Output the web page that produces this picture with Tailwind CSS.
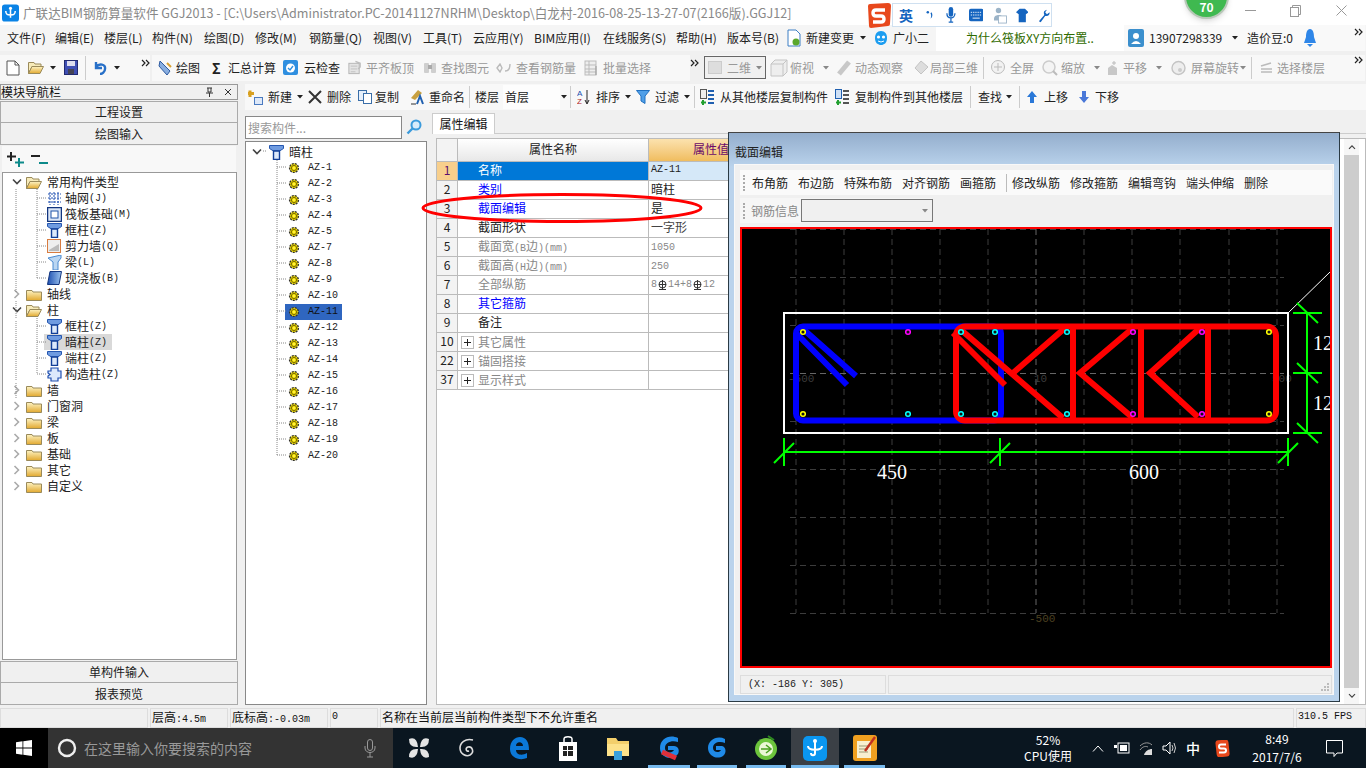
<!DOCTYPE html>
<html lang="zh"><head><meta charset="utf-8">
<script src="https://cdn.jsdelivr.net/npm/@tailwindcss/browser@4"></script>
<title>GGJ2013</title></head>
<body class="m-0 bg-white">
<svg width="0" height="0" class="absolute">
<defs>
<linearGradient id="gf" x1="0" y1="0" x2="0" y2="1"><stop offset="0" stop-color="#fdf3c4"/><stop offset="1" stop-color="#e2a92f"/></linearGradient>
<linearGradient id="gb" x1="0" y1="0" x2="1" y2="0"><stop offset="0" stop-color="#1d4fb0"/><stop offset="1" stop-color="#9cc3ee"/></linearGradient>
<symbol id="col" viewBox="0 0 15 15"><path d="M0.5 0.5H14.5V3.5L10.5 6H4.5L0.5 3.5Z" fill="#6f9be0" stroke="#2456b0" stroke-width="1"/><path d="M4.5 6H10.5V14.5H4.5Z" fill="#dce9fb" stroke="#123f98" stroke-width="1.4"/></symbol>
<symbol id="gear" viewBox="0 0 12 12"><circle cx="6" cy="6" r="4.4" fill="#f4e000" stroke="#333" stroke-width="1.4" stroke-dasharray="2 1"/><circle cx="6" cy="6" r="2.6" fill="none" stroke="#7a6a00" stroke-width="1"/><circle cx="6" cy="6" r="1.2" fill="#ffef40"/></symbol>
<symbol id="fc" viewBox="0 0 16 13"><path d="M0.5 2.5H6L7 4H15.5V12.5H0.5Z" fill="url(#gf)" stroke="#9a8a5a"/></symbol>
<symbol id="fo" viewBox="0 0 16 13"><path d="M0.5 1.5H6L7 3H13V5.5H4L0.5 12.5Z" fill="#f7ebba" stroke="#9a8a5a"/><path d="M4 5.5H15.5L12 12.5H0.5Z" fill="url(#gf)" stroke="#9a8a5a"/></symbol>
<symbol id="chd" viewBox="0 0 10 8"><path d="M1 1.5L5 5.5L9 1.5" fill="none" stroke="#444" stroke-width="1.6"/></symbol>
<symbol id="chr" viewBox="0 0 8 10"><path d="M1.5 1L5.5 5L1.5 9" fill="none" stroke="#aaa" stroke-width="1.6"/></symbol>
<symbol id="tri" viewBox="0 0 6 4"><path d="M0 0H6L3 3.5Z" fill="#222"/></symbol>
<symbol id="trg" viewBox="0 0 6 4"><path d="M0 0H6L3 3.5Z" fill="#888"/></symbol>
<symbol id="more" viewBox="0 0 9 8"><path d="M1 1L4 4L1 7M5 1L8 4L5 7" fill="none" stroke="#222" stroke-width="1.2"/></symbol>
<symbol id="gicon" viewBox="0 0 16 16"><rect x="2" y="3" width="11" height="11" fill="#e4e4e4" stroke="#b4b4b4"/><path d="M4 6H11M4 9H11M4 12H9" stroke="#c0c0c0"/><path d="M9 1L14 3V7L12 9" fill="none" stroke="#bdbdbd" stroke-width="1.5"/></symbol>
<symbol id="dot" viewBox="0 0 7 7"><circle cx="3.5" cy="3.5" r="2.3" fill="#111" stroke="currentColor" stroke-width="1.5"/></symbol>
<symbol id="pl" viewBox="0 0 13 13"><rect x="0.5" y="0.5" width="12" height="12" fill="#fff" stroke="#bbb"/><path d="M3 6.5H10M6.5 3V10" stroke="#222"/></symbol>
</defs>
</svg>
<div class="relative w-[1366px] h-[768px] overflow-hidden flex flex-col bg-[#f0f0f0] text-[12px] leading-[16px] text-[#222] font-['Noto_Sans_CJK_SC','Liberation_Sans',sans-serif]">

<!-- title bar -->
<div class="h-[25px] shrink-0 bg-white flex items-center pl-[2px] text-[12.6px] text-[#888]">
  <svg class="w-[17px] h-[18px] mr-[4px] shrink-0" viewBox="0 0 18 18"><rect width="18" height="18" rx="3" fill="#0a83e6"/><path d="M9 3V14M4 7C4 11 6 11 9 11S14 11 14 7" fill="none" stroke="#fff" stroke-width="1.6"/><circle cx="9" cy="4" r="1.6" fill="#fff"/></svg>
  <span class="whitespace-nowrap">广联达BIM钢筋算量软件 GGJ2013 - [C:\Users\Administrator.PC-20141127NRHM\Desktop\白龙村-2016-08-25-13-27-07(2166版).GGJ12]</span>
</div>

<!-- menu bar -->
<div class="h-[26px] shrink-0 bg-[#f5f5f5] flex items-center pl-[7px] whitespace-nowrap">
  <span class="w-[48px] shrink-0">文件(F)</span><span class="w-[49px] shrink-0">编辑(E)</span><span class="w-[48px] shrink-0">楼层(L)</span><span class="w-[52px] shrink-0">构件(N)</span><span class="w-[51px] shrink-0">绘图(D)</span><span class="w-[54px] shrink-0">修改(M)</span><span class="w-[64px] shrink-0">钢筋量(Q)</span><span class="w-[50px] shrink-0">视图(V)</span><span class="w-[50px] shrink-0">工具(T)</span><span class="w-[61px] shrink-0">云应用(Y)</span><span class="w-[69px] shrink-0">BIM应用(I)</span><span class="w-[73px] shrink-0">在线服务(S)</span><span class="w-[51px] shrink-0">帮助(H)</span><span class="w-[60px] shrink-0">版本号(B)</span>
  <svg class="w-[14px] h-[18px] mr-[5px] shrink-0" viewBox="0 0 14 18"><path d="M1 1H9L13 5V17H1Z" fill="#fff" stroke="#3d7fc4"/><circle cx="9" cy="13" r="3.5" fill="#5ba82c"/></svg>
  <span class="w-[54px] shrink-0">新建变更</span><svg class="w-[6px] h-[4px] shrink-0 mr-[7px]"><use href="#tri"/></svg>
  <svg class="w-[16px] h-[16px] mr-[4px] shrink-0" viewBox="0 0 16 16"><path d="M8 1C12 1 14 4 14 8C14 13 11 15 8 15S2 13 2 8C2 4 4 1 8 1Z" fill="#1c9df0"/><circle cx="5.5" cy="7" r="1.6" fill="#fff"/><circle cx="10.5" cy="7" r="1.6" fill="#fff"/><path d="M5 11Q8 13 11 11" stroke="#fff" fill="none"/></svg>
  <span class="w-[43px] shrink-0">广小二</span>
  <div class="w-[188px] h-[26px] shrink-0 bg-white flex items-center justify-center text-[#2f6b00]">为什么筏板XY方向布置..</div>
  <div class="w-[241px] h-[26px] bg-[#f9f9f9] flex items-center pl-[4px] shrink-0">
    <svg class="w-[16px] h-[18px] mr-[5px] shrink-0" viewBox="0 0 16 18"><rect width="16" height="18" rx="2" fill="#3b8fcd"/><circle cx="8" cy="7" r="3" fill="#fff"/><path d="M3 15Q8 9 13 15Z" fill="#fff"/></svg>
    <span class="w-[83px] shrink-0">13907298339</span><svg class="w-[6px] h-[4px] mr-[9px] shrink-0"><use href="#tri"/></svg>
    <span class="w-[56px] shrink-0">造价豆:0</span>
    <svg class="w-[14px] h-[18px] shrink-0" viewBox="0 0 14 18"><path d="M7 0C10 0 11 4 11 8L13 14H1L3 8C3 4 4 0 7 0Z" fill="#2f86e8"/><path d="M4 15H10L7 18Z" fill="#2f86e8"/></svg>
  </div>
</div>

<!-- toolbar 1 -->
<div class="h-[33px] shrink-0 bg-[#f0f0f0] flex items-center whitespace-nowrap">
  <div class="h-[26px] w-[150px] shrink-0 bg-[#f8f8f8] flex items-center pl-[6px]">
    <svg class="w-[14px] h-[16px] mr-[8px]" viewBox="0 0 14 16"><path d="M1 1H9L13 5V15H1Z" fill="#fff" stroke="#555"/><path d="M9 1V5H13" fill="none" stroke="#555"/></svg>
    <svg class="w-[16px] h-[15px] mr-[6px]"><use href="#fo"/></svg>
    <svg class="w-[6px] h-[4px] mr-[8px]"><use href="#tri"/></svg>
    <svg class="w-[14px] h-[15px] mr-[7px]" viewBox="0 0 14 15"><rect x="0.5" y="0.5" width="13" height="14" fill="#3f4fb4" stroke="#222a70"/><rect x="3" y="1" width="8" height="5" fill="#dde"/><rect x="4" y="9" width="6" height="5" fill="#445"/></svg>
    <span class="w-px h-[24px] bg-[#ccc] mr-[7px]"></span>
    <svg class="w-[15px] h-[14px] mr-[6px]" viewBox="0 0 15 14"><path d="M3 1V7H9M3 6C6 2 13 3 12 8C12 11 9 13 7 13" fill="none" stroke="#2870c8" stroke-width="2.4"/></svg>
    <svg class="w-[6px] h-[4px] mr-[21px]"><use href="#tri"/></svg>
    <svg class="w-[9px] h-[8px] -mt-[10px]"><use href="#more"/></svg>
  </div>
  <div class="h-[26px] ml-[2px] w-[538px] shrink-0 bg-[#f8f8f8] flex items-center pl-[6px]">
    <svg class="w-[14px] h-[16px] mr-[4px]" viewBox="0 0 14 16"><path d="M2 1L12 11L9 15L1 6Z" fill="#89aee0" stroke="#2d5aa0"/><path d="M9 3L13 7" stroke="#d8a030" stroke-width="2"/></svg>
    <span class="w-[36px]">绘图</span><span class="w-[16px] font-bold text-[14px]">Σ</span><span class="w-[55px]">汇总计算</span>
    <svg class="w-[15px] h-[15px] mr-[6px]" viewBox="0 0 15 15"><rect width="15" height="15" rx="2" fill="#2f8fe0"/><circle cx="7.5" cy="8" r="4.5" fill="#fff"/><path d="M5 8L7 10L10 6" stroke="#2f8fe0" fill="none" stroke-width="1.4"/></svg>
    <span class="w-[43px]">云检查</span>
    <svg class="w-[15px] h-[16px] mr-[4px]"><use href="#gicon"/></svg><span class="w-[57px] text-[#999]">平齐板顶</span>
    <svg class="w-[14px] h-[15px] mr-[4px]" viewBox="0 0 14 15"><rect x="1" y="3" width="5" height="10" rx="1" fill="#cfcfcf"/><rect x="8" y="3" width="5" height="10" rx="1" fill="#cfcfcf"/><rect x="5" y="5" width="4" height="4" fill="#aaa"/></svg><span class="w-[55px] text-[#999]">查找图元</span>
    <svg class="w-[15px] h-[10px] mr-[5px]" viewBox="0 0 15 10"><path d="M1 5L4 1L6 5L4 9ZM9 8Q14 8 14 1" fill="none" stroke="#bbb" stroke-width="1.4"/></svg><span class="w-[68px] text-[#999]">查看钢筋量</span>
    <svg class="w-[16px] h-[16px] mr-[3px]" viewBox="0 0 16 16"><rect x="1" y="1" width="11" height="14" fill="#eee" stroke="#bbb"/><path d="M1 5H12M1 9H12M1 12H12M5 1V15" stroke="#bbb"/><path d="M12 6V15" stroke="#999"/></svg><span class="text-[#999]">批量选择</span>
  </div>
  <svg class="w-[9px] h-[8px] -mt-[10px] shrink-0"><use href="#more"/></svg>
  <div class="h-[26px] ml-[5px] w-[661px] shrink-0 bg-[#f8f8f8] flex items-center text-[#999]">
    <div class="w-[62px] h-[23px] border border-[#666] bg-[#f0f0f0] flex items-center pl-[3px] mr-[4px] shrink-0"><span class="w-[14px] h-[13px] bg-[#ddd] border border-[#ccc] mr-[5px] shrink-0"></span><span class="w-[29px] shrink-0">二维</span><svg class="w-[6px] h-[4px] shrink-0"><use href="#trg"/></svg></div>
    <svg class="w-[18px] h-[18px] mr-[2px] shrink-0" viewBox="0 0 18 18"><path d="M1 5L5 1H17V13L13 17H1ZM1 5H13V17M13 5L17 1" fill="#eee" stroke="#c4c4c4"/></svg><span class="w-[33px] shrink-0">俯视</span><svg class="w-[6px] h-[4px] mr-[8px] shrink-0"><use href="#trg"/></svg>
    <svg class="w-[14px] h-[16px] mr-[4px] shrink-0" viewBox="0 0 14 16"><path d="M2 14L12 2" stroke="#c8c8c8" stroke-width="5"/></svg><span class="w-[59px] shrink-0">动态观察</span>
    <svg class="w-[15px] h-[15px] mr-[1px] shrink-0" viewBox="0 0 15 15"><path d="M7 1L14 7L7 14L1 8Z" fill="#ddd" stroke="#c4c4c4"/></svg><span class="w-[53px] shrink-0">局部三维</span>
    <span class="w-px h-[22px] bg-[#ccc] mr-[6px] shrink-0"></span>
    <svg class="w-[17px] h-[17px] mr-[3px] shrink-0" viewBox="0 0 17 17"><circle cx="8" cy="8" r="6.5" fill="#f2f2f2" stroke="#bbb"/><path d="M4 8H12M8 4V12" stroke="#bbb"/></svg><span class="w-[32px] shrink-0">全屏</span>
    <svg class="w-[16px] h-[16px] mr-[3px] shrink-0" viewBox="0 0 16 16"><circle cx="7" cy="7" r="6" fill="#f4f4f4" stroke="#ccc" stroke-width="1.5"/><path d="M11 11L15 15" stroke="#bbb" stroke-width="2"/></svg><span class="w-[33px] shrink-0">缩放</span><svg class="w-[6px] h-[4px] mr-[5px] shrink-0"><use href="#trg"/></svg>
    <svg class="w-[14px] h-[16px] mr-[4px] shrink-0" viewBox="0 0 14 16"><path d="M3 15V8L7 5L12 8V15Z" fill="#c8c8c8"/><path d="M9 1V5M7 3H11" stroke="#bbb"/></svg><span class="w-[33px] shrink-0">平移</span><svg class="w-[6px] h-[4px] mr-[9px] shrink-0"><use href="#trg"/></svg>
    <svg class="w-[15px] h-[16px] mr-[5px] shrink-0" viewBox="0 0 15 16"><circle cx="7.5" cy="8" r="6.5" fill="#eee" stroke="#c4c4c4" stroke-width="1.4"/><circle cx="9" cy="10" r="2" fill="#ccc"/></svg><span class="w-[49px] shrink-0">屏幕旋转</span><svg class="w-[6px] h-[4px] mr-[5px] shrink-0"><use href="#trg"/></svg>
    <span class="w-px h-[22px] bg-[#ccc] mr-[7px] shrink-0"></span>
    <svg class="w-[14px] h-[14px] mr-[4px] shrink-0" viewBox="0 0 14 14"><path d="M2 5L12 2M2 8H13M2 11H13" stroke="#bbb" stroke-width="1.6"/></svg><span class="shrink-0">选择楼层</span>
  </div>
</div>

<!-- main -->
<div class="flex-1 min-h-0 flex">
  <!-- left column -->
  <div class="w-[238px] shrink-0 flex flex-col mr-[7px]">
    <div class="h-[16px] bg-[#f0f0f0] border border-[#999] flex items-center pr-[5px] justify-between text-[#111]"><span>模块导航栏</span><span class="flex items-center gap-[11px]"><svg class="w-[7px] h-[10px]" viewBox="0 0 7 10"><path d="M1 1H6M2 1V5H5V1M0 6H7M3.5 6V10" fill="none" stroke="#333"/></svg><svg class="w-[8px] h-[8px]" viewBox="0 0 8 8"><path d="M1 1L7 7M7 1L1 7" stroke="#333"/></svg></span></div>
    <div class="mt-[1px] h-[22px] bg-[#f0f0f0] border border-[#aaa] flex items-center justify-center">工程设置</div>
    <div class="h-[22px] bg-[#f0f0f0] border border-t-0 border-[#aaa] flex items-center justify-center">绘图输入</div>
    <div class="mt-[1px] mx-[2px] h-[26px] bg-[#f8f8f8] flex items-center pl-[5px] gap-[7px]">
      <svg class="w-[17px] h-[15px]" viewBox="0 0 17 15"><path d="M4 0V9M0 4.5H9" stroke="#222" stroke-width="2"/><path d="M12 6V15M8 10.5H17" stroke="#0d8a8a" stroke-width="2"/></svg>
      <svg class="w-[17px] h-[11px]" viewBox="0 0 17 11"><path d="M0 2H9" stroke="#222" stroke-width="2"/><path d="M8 9H17" stroke="#0d8a8a" stroke-width="2"/></svg>
    </div>
    <div class="relative ml-[2px] w-[235px] h-[488px] bg-white border border-[#999] pt-[1px] text-[#222]">
      <svg class="absolute left-0 top-0 pointer-events-none" width="60" height="340" fill="none" stroke="#888" stroke-dasharray="1 1">
        <path d="M13 16V120M13 128V146M13 148V208M13 210V226M34 16V105M34 25H44M34 41H44M34 57H44M34 73H44M34 89H44M34 105H44M34 145V201M34 153H44M34 169H44M34 185H44M34 201H44"/>
      </svg>
      <div class="h-[16px] flex items-center pl-[9px]"><svg class="w-[10px] h-[8px] mr-[4px]"><use href="#chd"/></svg><svg class="w-[16px] h-[13px] mr-[5px]"><use href="#fo"/></svg>常用构件类型</div>
      <div class="h-[16px] flex items-center pl-[44px]"><svg class="w-[15px] h-[15px] mr-[3px]" viewBox="0 0 15 15"><path d="M1 3H14M1 7H14M1 11H14M3 1V14M7 1V14M11 1V14" stroke="#1f4fb0" stroke-dasharray="2 1"/></svg>轴网<span class="font-['Liberation_Mono',monospace] text-[10px] mt-[2px]">(J)</span></div>
      <div class="h-[16px] flex items-center pl-[44px]"><svg class="w-[15px] h-[15px] mr-[3px]" viewBox="0 0 15 15"><rect x="0.5" y="0.5" width="14" height="14" fill="#dce7f7" stroke="#12357f" stroke-width="1.5"/><rect x="4" y="4" width="7" height="7" fill="#fff" stroke="#2054a8"/></svg>筏板基础<span class="font-['Liberation_Mono',monospace] text-[10px] mt-[2px]">(M)</span></div>
      <div class="h-[16px] flex items-center pl-[44px]"><svg class="w-[15px] h-[15px] mr-[3px]"><use href="#col"/></svg>框柱<span class="font-['Liberation_Mono',monospace] text-[10px] mt-[2px]">(Z)</span></div>
      <div class="h-[16px] flex items-center pl-[44px]"><svg class="w-[15px] h-[14px] mr-[3px]" viewBox="0 0 15 14"><rect x="0.5" y="0.5" width="13" height="13" fill="#eee" stroke="#d87c40"/><path d="M2 11L12 5V12H2Z" fill="#bbb"/></svg>剪力墙<span class="font-['Liberation_Mono',monospace] text-[10px] mt-[2px]">(Q)</span></div>
      <div class="h-[16px] flex items-center pl-[44px]"><svg class="w-[15px] h-[15px] mr-[3px]" viewBox="0 0 15 15"><path d="M1 3L14 0V3L11 7V15H6V7Z" fill="#bad6f2" stroke="#4a8ad0"/></svg>梁<span class="font-['Liberation_Mono',monospace] text-[10px] mt-[2px]">(L)</span></div>
      <div class="h-[16px] flex items-center pl-[44px]"><svg class="w-[15px] h-[14px] mr-[3px]" viewBox="0 0 15 14"><path d="M3 0.5H14.5L12 13.5H0.5Z" fill="url(#gb)" stroke="#12357f"/></svg>现浇板<span class="font-['Liberation_Mono',monospace] text-[10px] mt-[2px]">(B)</span></div>
      <div class="h-[16px] flex items-center pl-[10px]"><svg class="w-[8px] h-[10px] mr-[5px]"><use href="#chr"/></svg><svg class="w-[16px] h-[13px] mr-[5px]"><use href="#fc"/></svg>轴线</div>
      <div class="h-[16px] flex items-center pl-[9px]"><svg class="w-[10px] h-[8px] mr-[4px]"><use href="#chd"/></svg><svg class="w-[16px] h-[13px] mr-[5px]"><use href="#fo"/></svg>柱</div>
      <div class="h-[16px] flex items-center pl-[44px]"><svg class="w-[15px] h-[15px] mr-[3px]"><use href="#col"/></svg>框柱<span class="font-['Liberation_Mono',monospace] text-[10px] mt-[2px]">(Z)</span></div>
      <div class="h-[16px] flex items-center pl-[41px]"><span class="flex items-center h-[16px] bg-[#d9d9d9] pl-[3px] pr-[5px]"><svg class="w-[15px] h-[15px] mr-[3px]"><use href="#col"/></svg>暗柱<span class="font-['Liberation_Mono',monospace] text-[10px] mt-[2px]">(Z)</span></span></div>
      <div class="h-[16px] flex items-center pl-[44px]"><svg class="w-[15px] h-[15px] mr-[3px]"><use href="#col"/></svg>端柱<span class="font-['Liberation_Mono',monospace] text-[10px] mt-[2px]">(Z)</span></div>
      <div class="h-[16px] flex items-center pl-[44px]"><svg class="w-[15px] h-[15px] mr-[3px]" viewBox="0 0 15 15"><path d="M4 1H11V4H14V11H11V14H4V11H1V9L3 7.5L1 6V4H4Z" fill="#dce9fb" stroke="#1f4fb0" stroke-width="1.2"/></svg>构造柱<span class="font-['Liberation_Mono',monospace] text-[10px] mt-[2px]">(Z)</span></div>
      <div class="h-[16px] flex items-center pl-[10px]"><svg class="w-[8px] h-[10px] mr-[5px]"><use href="#chr"/></svg><svg class="w-[16px] h-[13px] mr-[5px]"><use href="#fc"/></svg>墙</div>
      <div class="h-[16px] flex items-center pl-[10px]"><svg class="w-[8px] h-[10px] mr-[5px]"><use href="#chr"/></svg><svg class="w-[16px] h-[13px] mr-[5px]"><use href="#fc"/></svg>门窗洞</div>
      <div class="h-[16px] flex items-center pl-[10px]"><svg class="w-[8px] h-[10px] mr-[5px]"><use href="#chr"/></svg><svg class="w-[16px] h-[13px] mr-[5px]"><use href="#fc"/></svg>梁</div>
      <div class="h-[16px] flex items-center pl-[10px]"><svg class="w-[8px] h-[10px] mr-[5px]"><use href="#chr"/></svg><svg class="w-[16px] h-[13px] mr-[5px]"><use href="#fc"/></svg>板</div>
      <div class="h-[16px] flex items-center pl-[10px]"><svg class="w-[8px] h-[10px] mr-[5px]"><use href="#chr"/></svg><svg class="w-[16px] h-[13px] mr-[5px]"><use href="#fc"/></svg>基础</div>
      <div class="h-[16px] flex items-center pl-[10px]"><svg class="w-[8px] h-[10px] mr-[5px]"><use href="#chr"/></svg><svg class="w-[16px] h-[13px] mr-[5px]"><use href="#fc"/></svg>其它</div>
      <div class="h-[16px] flex items-center pl-[10px]"><svg class="w-[8px] h-[10px] mr-[5px]"><use href="#chr"/></svg><svg class="w-[16px] h-[13px] mr-[5px]"><use href="#fc"/></svg>自定义</div>
    </div>
    <div class="mt-[1px] h-[22px] bg-[#f0f0f0] border border-[#aaa] flex items-center justify-center">单构件输入</div>
    <div class="h-[22px] bg-[#f0f0f0] border border-t-0 border-[#aaa] flex items-center justify-center">报表预览</div>
  </div>

  <!-- right area -->
  <div class="flex-1 min-w-0 flex flex-col">
    <!-- toolbar 2 -->
    <div class="h-[26px] shrink-0 bg-[#f8f8f8] flex items-center whitespace-nowrap pl-[3px]">
      <svg class="w-[15px] h-[15px] mr-[5px]" viewBox="0 0 15 15"><path d="M2 0.5V7M-1 3.5H6" stroke="#d8a020" stroke-width="3"/><rect x="6.5" y="7.5" width="8" height="7" fill="#dde8f8" stroke="#4a7ac0"/></svg><span class="w-[29px]">新建</span><svg class="w-[6px] h-[4px] mr-[5px]"><use href="#tri"/></svg>
      <svg class="w-[14px] h-[14px] mr-[5px]" viewBox="0 0 14 14"><path d="M1 1L13 13M13 1L1 13" stroke="#333" stroke-width="2"/></svg><span class="w-[31px]">删除</span>
      <svg class="w-[14px] h-[14px] mr-[3px]" viewBox="0 0 14 14"><rect x="0.5" y="0.5" width="8" height="10" fill="#e6f0fb" stroke="#3a6ea8"/><rect x="5.5" y="3.5" width="8" height="10" fill="#fff" stroke="#3a6ea8"/></svg><span class="w-[35px]">复制</span>
      <svg class="w-[15px] h-[16px] mr-[4px]" viewBox="0 0 15 16"><path d="M1 9L8 1L12 4L5 11Z" fill="#c8a040"/><path d="M7 15L10 7L13 15" fill="none" stroke="#2060b0" stroke-width="2"/><path d="M1 15H6" stroke="#333"/></svg><span class="w-[40px]">重命名</span>
      <span class="w-px h-[22px] bg-[#ccc] mr-[5px]"></span><span class="w-[28px]">楼层</span>
      <div class="w-[57px] h-[24px] bg-[#fdfdfd] pl-[2px] flex items-center mr-[1px]">首层</div><svg class="w-[6px] h-[4px] mr-[3px]"><use href="#tri"/></svg>
      <span class="w-px h-[22px] bg-[#ccc] mr-[6px]"></span>
      <svg class="w-[14px] h-[16px] mr-[5px]" viewBox="0 0 14 16"><text x="0" y="7" font-size="8" fill="#2050b0" font-family="Liberation Sans">A</text><text x="0" y="15" font-size="8" fill="#b02020" font-family="Liberation Sans">Z</text><path d="M10 1V14M8 11L10 15L12 11" stroke="#222" fill="none"/></svg><span class="w-[29px]">排序</span><svg class="w-[6px] h-[4px] mr-[5px]"><use href="#tri"/></svg>
      <svg class="w-[14px] h-[14px] mr-[5px]" viewBox="0 0 14 14"><path d="M0.5 0.5H13.5L9 6V13.5L5 11V6Z" fill="#4f9fe8" stroke="#2070c0"/></svg><span class="w-[29px]">过滤</span><svg class="w-[6px] h-[4px] mr-[4px]"><use href="#tri"/></svg>
      <span class="w-px h-[22px] bg-[#ccc] mr-[5px]"></span>
      <svg class="w-[14px] h-[17px] mr-[6px]" viewBox="0 0 14 17"><rect x="0.5" y="0.5" width="6" height="9" fill="#eee" stroke="#555"/><path d="M3 11V16M1 13.5H6" stroke="#22a030" stroke-width="2"/><path d="M8 2H14M8 6H14M8 10H14M8 14H14" stroke="#2060b0" stroke-width="2"/></svg><span class="w-[115px]">从其他楼层复制构件</span>
      <svg class="w-[14px] h-[17px] mr-[6px]" viewBox="0 0 14 17"><rect x="0.5" y="0.5" width="6" height="9" fill="#cfe0f5" stroke="#2060b0"/><path d="M3 11V16M1 13.5H6" stroke="#22a030" stroke-width="2"/><path d="M8 2H14M8 6H14M8 10H14M8 14H14" stroke="#555" stroke-width="2"/></svg><span class="w-[115px]">复制构件到其他楼层</span>
      <span class="w-px h-[22px] bg-[#ccc] mr-[7px]"></span><span class="w-[28px]">查找</span><svg class="w-[6px] h-[4px] mr-[7px]"><use href="#tri"/></svg>
      <span class="w-px h-[22px] bg-[#ccc] mr-[7px]"></span>
      <svg class="w-[10px] h-[12px] mr-[7px]" viewBox="0 0 10 12"><path d="M5 0L10 6H7V12H3V6H0Z" fill="#2a78d8"/></svg><span class="w-[35px]">上移</span>
      <svg class="w-[10px] h-[12px] mr-[6px]" viewBox="0 0 10 12"><path d="M5 12L10 6H7V0H3V6H0Z" fill="#4a78d8"/></svg><span>下移</span>
    </div>
    <div class="flex-1 min-h-0 flex">
      <!-- component list -->
      <div class="w-[182px] shrink-0 flex flex-col mt-[6px] mb-[3px] mr-[5px]">
        <div class="h-[23px] flex mb-[2px]">
          <div class="w-[157px] h-[23px] bg-white border border-[#888] flex items-center pl-[2px] text-[#999]">搜索构件...</div>
          <svg class="w-[16px] h-[16px] ml-[4px] mt-[3px]" viewBox="0 0 16 16"><circle cx="10" cy="6" r="4.5" fill="#d8ecfb" stroke="#3b9bdc" stroke-width="2"/><path d="M7 9L1.5 14.5" stroke="#3b9bdc" stroke-width="2.4"/></svg>
        </div>
        <div class="relative flex-1 bg-white border border-[#888] pt-[2px]">
          <svg class="absolute left-0 top-0 pointer-events-none" width="42" height="320" fill="none" stroke="#888" stroke-dasharray="1 1">
            <path d="M31 18V313M31 25H41M31 41H41M31 57H41M31 73H41M31 89H41M31 105H41M31 121H41M31 137H41M31 153H41M31 169H41M31 185H41M31 201H41M31 217H41M31 233H41M31 249H41M31 265H41M31 281H41M31 297H41M31 313H41M17 9H21"/>
          </svg>
          <div class="h-[16px] flex items-center pl-[6px]"><svg class="w-[10px] h-[8px] mr-[7px]"><use href="#chd"/></svg><svg class="w-[15px] h-[15px] mr-[5px]"><use href="#col"/></svg>暗柱</div>
          <div class="font-['Liberation_Mono',monospace] text-[10px] text-[#222]">
            <div class="h-[16px] flex items-center pl-[42px]"><svg class="w-[12px] h-[12px] mr-[8px]"><use href="#gear"/></svg>AZ-1</div>
            <div class="h-[16px] flex items-center pl-[42px]"><svg class="w-[12px] h-[12px] mr-[8px]"><use href="#gear"/></svg>AZ-2</div>
            <div class="h-[16px] flex items-center pl-[42px]"><svg class="w-[12px] h-[12px] mr-[8px]"><use href="#gear"/></svg>AZ-3</div>
            <div class="h-[16px] flex items-center pl-[42px]"><svg class="w-[12px] h-[12px] mr-[8px]"><use href="#gear"/></svg>AZ-4</div>
            <div class="h-[16px] flex items-center pl-[42px]"><svg class="w-[12px] h-[12px] mr-[8px]"><use href="#gear"/></svg>AZ-5</div>
            <div class="h-[16px] flex items-center pl-[42px]"><svg class="w-[12px] h-[12px] mr-[8px]"><use href="#gear"/></svg>AZ-7</div>
            <div class="h-[16px] flex items-center pl-[42px]"><svg class="w-[12px] h-[12px] mr-[8px]"><use href="#gear"/></svg>AZ-8</div>
            <div class="h-[16px] flex items-center pl-[42px]"><svg class="w-[12px] h-[12px] mr-[8px]"><use href="#gear"/></svg>AZ-9</div>
            <div class="h-[16px] flex items-center pl-[42px]"><svg class="w-[12px] h-[12px] mr-[8px]"><use href="#gear"/></svg>AZ-10</div>
            <div class="h-[16px] flex items-center pl-[39px]"><span class="w-[57px] h-[16px] bg-[#2f66c0] flex items-center pl-[3px] text-[#111]"><svg class="w-[12px] h-[12px] mr-[8px] shrink-0"><use href="#gear"/></svg>AZ-11</span></div>
            <div class="h-[16px] flex items-center pl-[42px]"><svg class="w-[12px] h-[12px] mr-[8px]"><use href="#gear"/></svg>AZ-12</div>
            <div class="h-[16px] flex items-center pl-[42px]"><svg class="w-[12px] h-[12px] mr-[8px]"><use href="#gear"/></svg>AZ-13</div>
            <div class="h-[16px] flex items-center pl-[42px]"><svg class="w-[12px] h-[12px] mr-[8px]"><use href="#gear"/></svg>AZ-14</div>
            <div class="h-[16px] flex items-center pl-[42px]"><svg class="w-[12px] h-[12px] mr-[8px]"><use href="#gear"/></svg>AZ-15</div>
            <div class="h-[16px] flex items-center pl-[42px]"><svg class="w-[12px] h-[12px] mr-[8px]"><use href="#gear"/></svg>AZ-16</div>
            <div class="h-[16px] flex items-center pl-[42px]"><svg class="w-[12px] h-[12px] mr-[8px]"><use href="#gear"/></svg>AZ-17</div>
            <div class="h-[16px] flex items-center pl-[42px]"><svg class="w-[12px] h-[12px] mr-[8px]"><use href="#gear"/></svg>AZ-18</div>
            <div class="h-[16px] flex items-center pl-[42px]"><svg class="w-[12px] h-[12px] mr-[8px]"><use href="#gear"/></svg>AZ-19</div>
            <div class="h-[16px] flex items-center pl-[42px]"><svg class="w-[12px] h-[12px] mr-[8px]"><use href="#gear"/></svg>AZ-20</div>
          </div>
        </div>
      </div>
      <!-- property panel -->
      <div class="flex-1 min-w-0 flex flex-col mb-[3px]">
        <div class="h-[22px] mt-[2px] flex items-end border-b border-[#ccc] ">
          <div class="w-[63px] h-[21px] -mb-px bg-white border border-b-0 border-[#ccc] flex items-center justify-center text-[#111]">属性编辑</div>
        </div>
        <div class="flex-1 min-h-0 bg-white flex ml-[4px] mt-[4px] border border-[#bbb]">
          <div class="flex-1 min-w-0 flex flex-col">
            <div class="h-[23px] flex border-b border-[#bbb]">
              <div class="w-[21px] shrink-0 bg-[#f3f3f3] border-r border-[#bbb]"></div>
              <div class="w-[191px] shrink-0 bg-linear-to-b from-white to-[#e8e8e8] border-r border-[#bbb] flex items-center justify-center pb-[2px]">属性名称</div>
              <div class="flex-1 bg-linear-to-b from-[#fbe2ae] to-[#f0bd5e] pl-[44px] pb-[2px] flex items-center text-[#6a0a6a]">属性值</div>
            </div>
            <div class="h-[19px] flex border-b border-[#bbb]"><div class="w-[21px] shrink-0 bg-[#f8cf8c] border-r border-[#bbb] text-center text-[#5a1070]">1</div><div class="w-[191px] shrink-0 bg-[#0078d7] border-r border-[#bbb] pl-[20px] text-white">名称</div><div class="flex-1 bg-[#d5e8f8] pl-[2px] font-['Liberation_Mono',monospace] text-[10px]">AZ-11</div></div>
            <div class="h-[19px] flex border-b border-[#bbb]"><div class="w-[21px] shrink-0 bg-[#f3f3f3] border-r border-[#bbb] text-center">2</div><div class="w-[191px] shrink-0 border-r border-[#bbb] pl-[20px] text-[#0000ff]">类别</div><div class="flex-1 pl-[2px]">暗柱</div></div>
            <div class="h-[19px] flex border-b border-[#bbb]"><div class="w-[21px] shrink-0 bg-[#f3f3f3] border-r border-[#bbb] text-center">3</div><div class="w-[191px] shrink-0 border-r border-[#bbb] pl-[20px] text-[#0000ff]">截面编辑</div><div class="flex-1 pl-[2px]">是</div></div>
            <div class="h-[19px] flex border-b border-[#bbb]"><div class="w-[21px] shrink-0 bg-[#f3f3f3] border-r border-[#bbb] text-center">4</div><div class="w-[191px] shrink-0 border-r border-[#bbb] pl-[20px]">截面形状</div><div class="flex-1 pl-[2px] text-[#444]">一字形</div></div>
            <div class="h-[19px] flex border-b border-[#bbb] text-[#888]"><div class="w-[21px] shrink-0 bg-[#f3f3f3] border-r border-[#bbb] text-center text-[#222]">5</div><div class="w-[191px] shrink-0 border-r border-[#bbb] pl-[20px]">截面宽<span class="font-['Liberation_Mono',monospace] text-[10px]">(B</span>边<span class="font-['Liberation_Mono',monospace] text-[10px]">)(mm)</span></div><div class="flex-1 pl-[2px] font-['Liberation_Mono',monospace] text-[10px] leading-[19px]">1050</div></div>
            <div class="h-[19px] flex border-b border-[#bbb] text-[#888]"><div class="w-[21px] shrink-0 bg-[#f3f3f3] border-r border-[#bbb] text-center text-[#222]">6</div><div class="w-[191px] shrink-0 border-r border-[#bbb] pl-[20px]">截面高<span class="font-['Liberation_Mono',monospace] text-[10px]">(H</span>边<span class="font-['Liberation_Mono',monospace] text-[10px]">)(mm)</span></div><div class="flex-1 pl-[2px] font-['Liberation_Mono',monospace] text-[10px] leading-[19px]">250</div></div>
            <div class="h-[19px] flex border-b border-[#bbb] text-[#888]"><div class="w-[21px] shrink-0 bg-[#f3f3f3] border-r border-[#bbb] text-center text-[#222]">7</div><div class="w-[191px] shrink-0 border-r border-[#bbb] pl-[20px]">全部纵筋</div><div class="flex-1 pl-[2px] font-['Liberation_Mono',monospace] text-[10px] flex items-center">8<svg class="w-[9px] h-[10px] mx-[1px]" viewBox="0 0 9 10"><circle cx="4.5" cy="4.5" r="3.5" fill="none" stroke="#333"/><path d="M4.5 0V9M1 9.5H8M1 4.5H8" stroke="#333"/></svg>14+8<svg class="w-[9px] h-[10px] mx-[1px]" viewBox="0 0 9 10"><circle cx="4.5" cy="4.5" r="3.5" fill="none" stroke="#333"/><path d="M4.5 0V9M1 9.5H8M1 4.5H8" stroke="#333"/></svg>12</div></div>
            <div class="h-[19px] flex border-b border-[#bbb]"><div class="w-[21px] shrink-0 bg-[#f3f3f3] border-r border-[#bbb] text-center">8</div><div class="w-[191px] shrink-0 border-r border-[#bbb] pl-[20px] text-[#0000ff]">其它箍筋</div><div class="flex-1"></div></div>
            <div class="h-[19px] flex border-b border-[#bbb]"><div class="w-[21px] shrink-0 bg-[#f3f3f3] border-r border-[#bbb] text-center">9</div><div class="w-[191px] shrink-0 border-r border-[#bbb] pl-[20px]">备注</div><div class="flex-1"></div></div>
            <div class="h-[19px] flex border-b border-[#bbb]"><div class="w-[21px] shrink-0 bg-[#f3f3f3] border-r border-[#bbb] text-center">10</div><div class="w-[191px] shrink-0 border-r border-[#bbb] pl-[3px] flex items-center text-[#888]"><svg class="w-[13px] h-[13px] mr-[4px]"><use href="#pl"/></svg>其它属性</div><div class="flex-1"></div></div>
            <div class="h-[19px] flex border-b border-[#bbb]"><div class="w-[21px] shrink-0 bg-[#f3f3f3] border-r border-[#bbb] text-center">22</div><div class="w-[191px] shrink-0 border-r border-[#bbb] pl-[3px] flex items-center text-[#888]"><svg class="w-[13px] h-[13px] mr-[4px]"><use href="#pl"/></svg>锚固搭接</div><div class="flex-1"></div></div>
            <div class="h-[19px] flex border-b border-[#bbb]"><div class="w-[21px] shrink-0 bg-[#f3f3f3] border-r border-[#bbb] text-center">37</div><div class="w-[191px] shrink-0 border-r border-[#bbb] pl-[3px] flex items-center text-[#888]"><svg class="w-[13px] h-[13px] mr-[4px]"><use href="#pl"/></svg>显示样式</div><div class="flex-1"></div></div>
          </div>
          <!-- scrollbar -->
          <div class="w-[26px] shrink-0 bg-white flex justify-end pr-[6px]">
            <div class="w-[15px] flex flex-col bg-[#f0f0f0]">
              <div class="h-[16px] bg-[#f6f6f6] flex items-center justify-center"><svg class="w-[8px] h-[6px] rotate-180"><use href="#chd"/></svg></div>
              <div class="flex-1 bg-[#cdcdcd]"></div>
              <div class="h-[16px] bg-[#f6f6f6] flex items-center justify-center"><svg class="w-[8px] h-[6px]"><use href="#chd"/></svg></div>
            </div>
          </div>
        </div>
      </div>
    </div>
  </div>
</div>

<!-- status bar -->
<div class="h-[20px] shrink-0 flex gap-[2px] text-[#111] bg-[#f0f0f0] whitespace-nowrap">
  <div class="w-[148px] border border-[#ddd]"></div>
  <div class="w-[78px] border border-[#ddd] pl-[1px]">层高<span class="font-['Liberation_Mono',monospace] text-[10px]">:4.5m</span></div>
  <div class="w-[98px] border border-[#ddd] pl-[1px]">底标高<span class="font-['Liberation_Mono',monospace] text-[10px]">:-0.03m</span></div>
  <div class="w-[48px] border border-[#ddd] pl-[1px] font-['Liberation_Mono',monospace] text-[10px]">0</div>
  <div class="w-[914px] border border-[#ddd] pl-[1px]">名称在当前层当前构件类型下不允许重名</div>
  <div class="flex-1 border border-[#ddd] pl-[1px] font-['Liberation_Mono',monospace] text-[10px]">310.5 FPS</div>
</div>

<!-- taskbar -->
<div class="h-[40px] shrink-0 bg-[#0a1620] flex items-stretch text-white relative">
  <div class="w-[48px] shrink-0 bg-black flex items-center justify-center">
    <svg class="w-[16px] h-[16px]" viewBox="0 0 16 16" fill="#fff"><path d="M0 2.2L6.5 1.3V7.6H0ZM7.3 1.2L16 0V7.6H7.3ZM0 8.4H6.5V14.7L0 13.8ZM7.3 8.4H16V16L7.3 14.8Z"/></svg>
  </div>
  <div class="w-[345px] shrink-0 bg-[#333] flex items-center pl-[9px] text-[14px] text-[#999] relative">
    <svg class="w-[20px] h-[20px] mr-[7px]" viewBox="0 0 20 20"><circle cx="10" cy="10" r="8" fill="none" stroke="#eee" stroke-width="2.4"/></svg>
    在这里输入你要搜索的内容
    <svg class="absolute left-[316px] top-[11px] w-[12px] h-[19px]" viewBox="0 0 12 19"><rect x="3.5" y="0.5" width="5" height="11" rx="2.5" fill="none" stroke="#999"/><path d="M1 7V9C1 15 11 15 11 9V7M6 13V18M3 18H9" fill="none" stroke="#999"/></svg>
  </div>
  <div class="flex items-center pl-[1px] shrink-0">
    <div class="w-[49px] flex justify-center"><svg class="w-[24px] h-[24px]" viewBox="0 0 24 24" fill="#e4e4e4"><path d="M2 3Q10 0 11 11Q2 12 2 3ZM22 3Q14 0 13 11Q22 12 22 3ZM2 21Q10 24 11 13Q2 12 2 21ZM22 21Q14 24 13 13Q22 12 22 21Z"/></svg></div>
    <div class="w-[49px] flex justify-center"><svg class="w-[22px] h-[22px]" viewBox="0 0 22 22"><path d="M16 3C8 1 3 6 3 11C3 17 9 20 13 18C18 15 15 9 11 10C8 11 9 15 12 14" fill="none" stroke="#ddd" stroke-width="1.6"/></svg></div>
    <div class="w-[54px] flex justify-center"><svg class="w-[22px] h-[24px]" viewBox="0 0 22 24"><path d="M2 13C2 5 7 1 12 1C18 1 21 6 21 14H8C8 19 14 20 19 17V22C12 25 2 22 2 13ZM8 10H15C15 5 8 5 8 10Z" fill="#0b78d8"/></svg></div>
    <div class="w-[44px] flex justify-center"><svg class="w-[20px] h-[25px]" viewBox="0 0 20 25"><path d="M1 6H19V25H1Z" fill="#fff"/><path d="M6 6V3C6 0 14 0 14 3V6" fill="none" stroke="#fff" stroke-width="1.5"/><path d="M5 10H9V14H5ZM10 10H15V14H10ZM5 15H9V20H5ZM10 15H15V20H10Z" fill="#222"/></svg></div>
    <div class="w-[55px] flex justify-center"><svg class="w-[22px] h-[24px]" viewBox="0 0 22 24"><path d="M0 2H9L11 5H22V20H0Z" fill="#f3cf6b"/><rect x="0" y="8" width="22" height="12" fill="#fde28a"/><rect x="7" y="15" width="8" height="9" fill="#39a0dc"/></svg></div>
    <div class="w-[48px] flex justify-center"><svg class="w-[26px] h-[28px]" viewBox="0 0 26 28"><path d="M22 4C14 0 4 4 4 14C4 24 16 27 22 20C24 16 22 12 18 12H12V16H18C16 20 9 19 9 14C9 8 16 6 22 8Z" fill="#1f8ae8"/><path d="M6 18L20 24" stroke="#e0303a" stroke-width="5"/></svg></div>
    <div class="w-[47px] flex justify-center"><svg class="w-[24px] h-[26px]" viewBox="0 0 24 26"><path d="M20 4C12 0 3 5 3 13C3 21 12 25 18 21C22 18 21 12 17 11H11V15H16C15 18 8 18 8 13C8 7 15 6 20 8Z" fill="#1f8ae8"/></svg></div>
    <div class="w-[51px] flex justify-center"><svg class="w-[24px] h-[26px]" viewBox="0 0 24 26"><circle cx="12" cy="14" r="11" fill="#6cc43c"/><circle cx="12" cy="14" r="7" fill="#eaf7d5"/><path d="M7 14H17M12 10L17 14L12 18" stroke="#4aa020" fill="none" stroke-width="1.5"/><path d="M14 1L20 5" stroke="#2d8a20" stroke-width="2"/></svg></div>
    <div class="w-[48px] h-[40px] bg-[#3b4046] flex items-center justify-center"><svg class="w-[24px] h-[25px]" viewBox="0 0 24 25"><rect width="24" height="25" rx="5" fill="#0a96f0"/><path d="M12 5V17C12 20 8 20 8 17M5 10C5 15 19 15 19 10" fill="none" stroke="#fff" stroke-width="2"/><circle cx="12" cy="5" r="2" fill="#fff"/></svg></div>
    <div class="w-[52px] flex justify-center"><svg class="w-[24px] h-[26px]" viewBox="0 0 24 26"><rect width="24" height="26" rx="3" fill="#f0a020"/><rect x="4" y="6" width="14" height="17" fill="#f8efd0"/><path d="M6 11H15M6 14H15M6 17H15" stroke="#997"/><path d="M22 2L12 16" stroke="#c03020" stroke-width="2.4"/></svg></div>
  </div>
  <div class="absolute left-[648px] bottom-0 h-[3px] w-[42px] bg-[#76b9ed]"></div>
  <div class="absolute left-[697px] bottom-0 h-[3px] w-[40px] bg-[#76b9ed]"></div>
  <div class="absolute left-[746px] bottom-0 h-[3px] w-[40px] bg-[#76b9ed]"></div>
  <div class="absolute left-[791px] bottom-0 h-[3px] w-[48px] bg-[#76b9ed]"></div>
  <div class="absolute left-[844px] bottom-0 h-[3px] w-[41px] bg-[#76b9ed]"></div>

  <div class="ml-[123px] w-[68px] shrink-0 flex flex-col items-center justify-center text-[12px] leading-[16px] whitespace-nowrap"><span>52%</span><span>CPU使用</span></div>
  <div class="ml-[10px] flex items-center shrink-0">
    <svg class="w-[12px] h-[7px] mr-[10px]" viewBox="0 0 12 7"><path d="M1 6.5L6 1L11 6.5" fill="none" stroke="#fff"/></svg>
    <svg class="w-[16px] h-[12px] mr-[9px]" viewBox="0 0 16 12"><rect x="4" y="1" width="11" height="10" fill="none" stroke="#fff"/><rect x="6" y="3" width="7" height="6" fill="#fff"/><path d="M0 3H3V6H0Z" fill="#fff"/></svg>
    <svg class="w-[14px] h-[13px] mr-[9px]" viewBox="0 0 14 13"><path d="M1 8C4 4 7 4 9 5M1 4C5 0 10 0 13 3" fill="none" stroke="#999"/><path d="M5 13C6 9 10 7 13 7V13Z" fill="#ddd"/></svg>
    <svg class="w-[15px] h-[14px] mr-[9px]" viewBox="0 0 15 14"><path d="M1 5H4L8 1V13L4 9H1Z" fill="none" stroke="#fff"/><path d="M10 4Q12 7 10 10M12 2Q15 7 12 12" fill="none" stroke="#ccc"/></svg>
    <span class="text-[14px] font-medium mr-[15px] w-[14px]">中</span>
    <svg class="w-[15px] h-[17px]" viewBox="0 0 15 17"><rect x="1" y="0" width="13" height="17" rx="3" fill="#e8481c" transform="rotate(-6 7 8)"/><path d="M11 4.5H6Q4 4.5 4 6.5T6 8.5H9Q11 8.5 11 10.5T9 12.5H4" fill="none" stroke="#fff" stroke-width="2"/></svg>
  </div>
  <div class="ml-[13px] w-[68px] shrink-0 flex flex-col items-center justify-center text-[12px] leading-[18px] whitespace-nowrap"><span>8:49</span><span>2017/7/6</span></div>
  <div class="ml-[15px] flex items-center"><svg class="w-[17px] h-[17px]" viewBox="0 0 17 17"><path d="M0.5 0.5H16.5V13H11L8 16.5V13H0.5Z" fill="none" stroke="#fff"/></svg></div>
</div>

<!-- floating section editor window -->
<div class="absolute left-[728px] top-[132px] w-[612px] h-[570px] border border-[#2a3a44] border-t-[#444] bg-linear-to-b from-[#94aecd] to-[#bad3ec] to-[6%] flex flex-col pl-[5px] pr-[5px] pb-[6px] z-10">
  <div class="h-[31px] shrink-0 flex items-center text-[#222] pt-[6px] pl-[1px]">截面编辑</div>
  <div class="flex-1 min-h-0 bg-[#f0f0f0] border border-[#f8f8f8] flex flex-col pl-[5px] pr-[1px] pt-[5px]">
    <div class="h-[25px] shrink-0 bg-[#fafafa] flex items-center pl-[3px] whitespace-nowrap">
      <span class="w-[1px] h-[16px] border-l-2 border-dotted border-[#aaa] mr-[7px]"></span>
      <span class="w-[46px]">布角筋</span><span class="w-[46px]">布边筋</span><span class="w-[58px]">特殊布筋</span><span class="w-[58px]">对齐钢筋</span><span class="w-[46px]">画箍筋</span>
      <span class="w-px h-[18px] bg-[#bbb] mr-[5px]"></span>
      <span class="w-[58px]">修改纵筋</span><span class="w-[58px]">修改箍筋</span><span class="w-[58px]">编辑弯钩</span><span class="w-[58px]">端头伸缩</span><span>删除</span>
    </div>
    <div class="h-[25px] mt-[3px] w-[192px] shrink-0 bg-[#f6f6f6] flex items-center pl-[3px] text-[#888] whitespace-nowrap">
      <span class="w-[1px] h-[16px] border-l-2 border-dotted border-[#aaa] mr-[6px]"></span>
      <span class="w-[50px] shrink-0">钢筋信息</span>
      <div class="w-[132px] h-[23px] shrink-0 border border-[#777] bg-[#f0f0f0] flex items-center justify-end pr-[4px]"><svg class="w-[6px] h-[4px]"><use href="#trg"/></svg></div>
    </div>
    <div class="shrink-0 w-[592px] h-[441px] mt-[4px] border-2 border-[#ff0000] bg-black overflow-hidden">
      <svg class="block" width="588" height="437" viewBox="742 229 588 437">
        <g stroke="#3c3c3c" stroke-width="1" stroke-dasharray="6 4" fill="none">
          <path d="M796 229V613M844 229V613M892 229V613M940 229V613M988 229V613M1084 229V613M1132 229V613M1180 229V613M1229 229V613M1277 229V613"/>
          <path d="M790 229.5H1284M790 277.5H1284M790 325.5H1284M790 421.5H1284M790 469.5H1284M790 517.5H1284M790 565.5H1284M790 613.5H1284"/>
        </g>
        <path d="M1036 229V613M790 373.5H1284" stroke="#666" stroke-dasharray="6 4" fill="none"/>
        <g font-family="Liberation Mono, monospace" font-size="11" fill="#3c3c3c">
          <text x="788" y="382">-500</text><text x="1034" y="382">10</text><text x="1272" y="382">500</text>
          <text x="1029" y="622" fill="#4c4020">-500</text>
        </g>
        <rect x="784" y="313" width="504" height="120" fill="none" stroke="#fff" stroke-width="2"/>
        <path d="M1288 313L1330 272" stroke="#fff"/>
        <g fill="none" stroke="#0000ff" stroke-width="6">
          <rect x="796" y="326.5" width="205" height="94" rx="7"/>
          <path d="M803 329L856 376M796 333L847 385"/>
        </g>
        <g fill="none" stroke="#ff0000" stroke-width="6">
          <rect x="956" y="326.5" width="320" height="94" rx="9"/>
          <path d="M1073 326V420M1141 326V420M1208 326V420"/>
          <path d="M960 329L1063 418M953 333L1005 385M1065 328L1013 373"/>
          <path d="M1133 328L1080 373L1133 418M1200 328L1150 373L1198 417"/>
        </g>
        <g>
          <svg x="799.5" y="328.5" width="7" height="7" class="text-[#ffff00]"><use href="#dot"/></svg>
          <svg x="799.5" y="410.5" width="7" height="7" class="text-[#ffff00]"><use href="#dot"/></svg>
          <svg x="904.5" y="328.5" width="7" height="7" class="text-[#ff00ff]"><use href="#dot"/></svg>
          <svg x="904.5" y="410.5" width="7" height="7" class="text-[#00ffff]"><use href="#dot"/></svg>
          <svg x="957.5" y="328.5" width="7" height="7" class="text-[#00ffff]"><use href="#dot"/></svg>
          <svg x="957.5" y="410.5" width="7" height="7" class="text-[#00ffff]"><use href="#dot"/></svg>
          <svg x="991.5" y="328.5" width="7" height="7" class="text-[#00ffff]"><use href="#dot"/></svg>
          <svg x="991.5" y="410.5" width="7" height="7" class="text-[#00ffff]"><use href="#dot"/></svg>
          <svg x="1063.5" y="328.5" width="7" height="7" class="text-[#00ffff]"><use href="#dot"/></svg>
          <svg x="1063.5" y="410.5" width="7" height="7" class="text-[#00ffff]"><use href="#dot"/></svg>
          <svg x="1129.5" y="328.5" width="7" height="7" class="text-[#ff00ff]"><use href="#dot"/></svg>
          <svg x="1129.5" y="410.5" width="7" height="7" class="text-[#ff00ff]"><use href="#dot"/></svg>
          <svg x="1198.5" y="328.5" width="7" height="7" class="text-[#ff00ff]"><use href="#dot"/></svg>
          <svg x="1198.5" y="410.5" width="7" height="7" class="text-[#ff00ff]"><use href="#dot"/></svg>
          <svg x="1265.5" y="328.5" width="7" height="7" class="text-[#ffff00]"><use href="#dot"/></svg>
          <svg x="1265.5" y="410.5" width="7" height="7" class="text-[#ffff00]"><use href="#dot"/></svg>
        </g>
        <g stroke="#00ff00" stroke-width="2" fill="none">
          <path d="M784 452H1288M784 438V466M1000 438V466M1288 438V466M774 463L794 443M990 463L1010 443M1278 463L1298 443"/>
          <path d="M1307 313V433M1293 313H1322M1293 373H1322M1293 433H1322M1297 303L1318 323M1297 363L1318 383M1297 423L1318 443"/>
        </g>
        <g font-family="Liberation Serif, serif" font-size="20" fill="#fff">
          <text x="877" y="479">450</text><text x="1129" y="479">600</text>
          <text x="1313" y="350">12</text><text x="1313" y="410">12</text>
        </g>
      </svg>
    </div>
    <div class="h-[19px] mt-[7px] shrink-0 flex gap-[2px] font-['Liberation_Mono',monospace] text-[10px]">
      <div class="w-[146px] border border-[#ddd] bg-[#f0f0f0] pl-[7px] leading-[18px]">(X: -186 Y: 305)</div>
      <div class="flex-1 border border-[#ddd] bg-[#f0f0f0] relative">
        <svg class="absolute right-[1px] bottom-[1px] w-[10px] h-[10px]" viewBox="0 0 10 10" fill="#bbb"><rect x="7" y="1" width="2" height="2"/><rect x="4" y="4" width="2" height="2"/><rect x="7" y="4" width="2" height="2"/><rect x="1" y="7" width="2" height="2"/><rect x="4" y="7" width="2" height="2"/><rect x="7" y="7" width="2" height="2"/></svg>
      </div>
    </div>
  </div>
</div>

<!-- annotation ellipse -->
<svg class="absolute left-[420px] top-[190px] z-20" width="285" height="36" viewBox="420 190 285 36"><ellipse cx="562" cy="208" rx="139" ry="13.5" fill="none" stroke="#ff0000" stroke-width="3"/></svg>

<!-- toolbar overflow chevrons at the right edge -->
<svg class="absolute left-[1354px] top-[28px] w-[9px] h-[8px] z-30"><use href="#more"/></svg>
<svg class="absolute left-[1354px] top-[56px] w-[9px] h-[8px] z-30"><use href="#more"/></svg>

<!-- ime bar -->
<div class="absolute left-[892px] top-[3px] w-[160px] h-[24px] bg-white border border-[#cfe0f0] z-20 flex items-center pl-[6px] text-[#1565c0] gap-[13px]">
  <span class="font-bold text-[14px]">英</span>
  <svg class="w-[8px] h-[10px]" viewBox="0 0 8 10" fill="#1565c0"><circle cx="2" cy="2" r="1.4"/><path d="M6 2C8 4 7 8 5 9C6 7 6 5 5 3Z"/></svg>
  <svg class="w-[11px] h-[18px]" viewBox="0 0 11 18" fill="#1565c0"><rect x="3" y="0" width="5" height="11" rx="2.5"/><path d="M1 7C1 14 10 14 10 7M5.5 13V17M3 17H8" fill="none" stroke="#1565c0" stroke-width="1.4"/></svg>
  <svg class="w-[16px] h-[14px]" viewBox="0 0 16 14"><rect width="16" height="14" rx="2" fill="#1565c0"/><path d="M2 4H14M2 7H14" stroke="#fff" stroke-dasharray="1.5 1"/><path d="M4 10.5H12" stroke="#fff"/></svg>
  <svg class="w-[14px] h-[18px] -ml-[2px]" viewBox="0 0 14 18"><circle cx="5" cy="4" r="3" fill="#9cb4c8"/><path d="M0 13C0 8 9 8 9 11V15H0Z" fill="#9cb4c8"/><rect x="5" y="10" width="9" height="8" fill="#fff" stroke="#9cb4c8"/></svg>
  <svg class="w-[14px] h-[15px] -ml-[4px]" viewBox="0 0 14 15" fill="#1565c0"><path d="M4 0H10L14 4L11 6V15H3V6L0 4Z"/></svg>
  <svg class="w-[14px] h-[15px] -ml-[3px]" viewBox="0 0 14 15"><path d="M1 14L7 7Q5 2 10 1L8 4L10 6L13 4Q13 9 8 8L3 15Z" fill="#1565c0"/></svg>
</div>
<svg class="absolute left-[866px] top-[3px] z-30 w-[26px] h-[25px]" viewBox="0 0 26 25"><path d="M2 3Q2 1 4 1L22 0Q25 0 25 3L24 21Q24 23 22 23L5 25Q3 25 3 23Z" fill="#e8481c"/><path d="M19 7H10Q7 7 7 10T10 13H15Q18 13 18 16T15 19H7" fill="none" stroke="#fff" stroke-width="3.4"/></svg>

<!-- score badge -->
<div class="absolute left-[1184px] -top-[26px] w-[45px] h-[45px] rounded-full bg-[#3fb950] border-2 border-[#b8c8b8] shadow-md z-20 flex items-end justify-center pb-[4px] text-white text-[12px] leading-[12px] font-bold">70</div>

<!-- window controls -->
<div class="absolute left-[1245px] top-[10px] w-[11px] h-px bg-[#999] z-20"></div>
<svg class="absolute left-[1290px] top-[5px] w-[11px] h-[12px] z-20" viewBox="0 0 11 12" fill="none" stroke="#999"><rect x="0.5" y="2.5" width="8" height="9"/><path d="M2.5 2.5V0.5H10.5V9.5H8.5"/></svg>
<svg class="absolute left-[1336px] top-[5px] w-[11px] h-[11px] z-20" viewBox="0 0 11 11" stroke="#999"><path d="M0.5 0.5L10.5 10.5M10.5 0.5L0.5 10.5"/></svg>
</div>
</body></html>
